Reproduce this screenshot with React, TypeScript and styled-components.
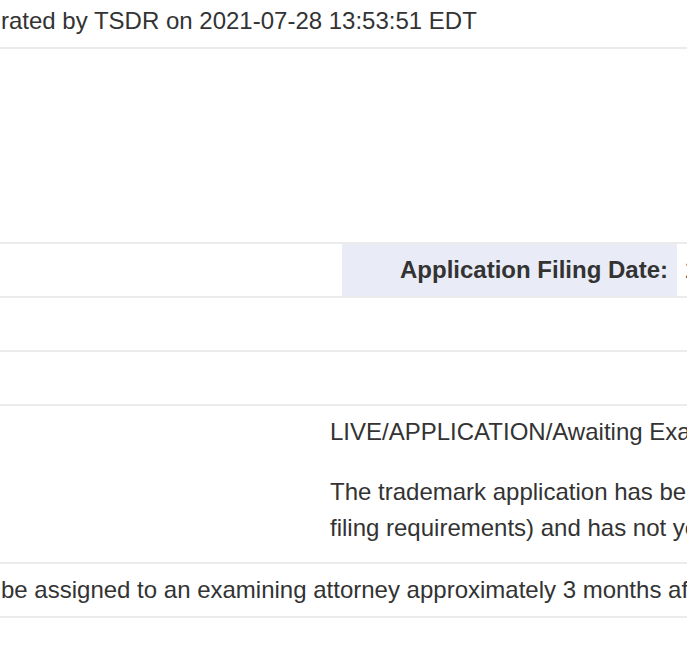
import React from "react";
import styled, { createGlobalStyle } from "styled-components";

const GlobalStyle = createGlobalStyle`
  html, body {
    margin: 0;
    padding: 0;
    background: #ffffff;
  }
  body {
    font-family: "Liberation Sans", Arial, Helvetica, sans-serif;
    font-size: 24px;
    line-height: 36px;
    color: #333333;
    overflow: hidden;
  }
`;

const Page = styled.div`
  width: 687px;
  overflow: hidden;
`;

const Block = styled.div<{ $height?: number }>`
  border-bottom: 2px solid #ebebeb;
  white-space: nowrap;
  overflow: hidden;
  ${(p) => (p.$height ? `height: ${p.$height}px;` : "")}
`;

const GeneratedLine = styled(Block)`
  padding: 3px 0 8px 1px;
`;

const Row = styled(Block)<{ $cols: string }>`
  display: grid;
  grid-template-columns: ${(p) => p.$cols};
  min-height: 52px;
`;

const Cell = styled.div`
  padding: 8px 0;
  white-space: nowrap;
  overflow: hidden;
`;

const LabelCell = styled(Cell)`
  background: #e9ecf6;
  font-weight: bold;
  text-align: right;
  padding-right: 9px;
`;

const ValueCell = styled(Cell)`
  padding-left: 8px;
`;

const StatusCell = styled(Cell)`
  padding-bottom: 16px;
`;

const StatusText = styled.div`
  white-space: nowrap;
`;

const Description = styled.p`
  margin: 24px 0 0;
  white-space: nowrap;
`;

const NoteCell = styled(Cell)`
  padding-left: 1px;
`;

export default function App() {
  return (
    <Page>
      <GlobalStyle />
      <GeneratedLine>rated by TSDR on 2021-07-28 13:53:51 EDT</GeneratedLine>
      <Block $height={193} />
      <Row $cols="342px 335px 1fr">
        <Cell />
        <LabelCell>Application Filing Date:</LabelCell>
        <ValueCell>2021-04-27</ValueCell>
      </Row>
      <Row $cols="1fr">
        <Cell />
      </Row>
      <Row $cols="1fr">
        <Cell />
      </Row>
      <Row $cols="330px 1fr">
        <Cell />
        <StatusCell>
          <StatusText>LIVE/APPLICATION/Awaiting Examination</StatusText>
          <Description>
            The trademark application has been accepted by the Office (has met the minimum
            <br />
            filing requirements) and has not yet been assigned to an examiner.
          </Description>
        </StatusCell>
      </Row>
      <Row $cols="1fr">
        <NoteCell>
          be assigned to an examining attorney approximately 3 months after filing.
        </NoteCell>
      </Row>
    </Page>
  );
}
